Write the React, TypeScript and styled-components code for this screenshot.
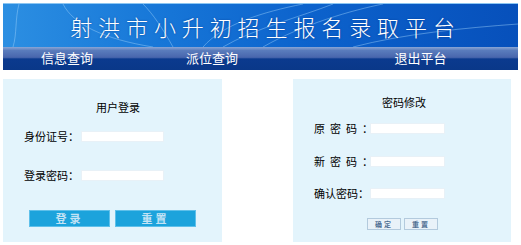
import React from 'react';
import styled, { createGlobalStyle } from 'styled-components';

const GlobalStyle = createGlobalStyle`
  html, body {
    margin: 0;
    padding: 0;
    background: #ffffff;
    font-family: "Liberation Sans", "Noto Sans CJK SC", sans-serif;
  }
`;

const Page = styled.div`
  width: 521px;
  height: 245px;
  padding: 3px;
  box-sizing: border-box;
`;

const Header = styled.div`
  width: 515px;
`;

const Banner = styled.div`
  position: relative;
  height: 43px;
  overflow: hidden;
  background: linear-gradient(90deg, #2c8fe2 0%, #1777d8 30%, #0c62cc 60%, #0750bb 100%);
  border-top: 1px solid #8cc6f2;
  display: flex;
  align-items: center;
  justify-content: center;
`;

const Arcs = styled.svg`
  position: absolute;
  left: 0;
  top: 0;
`;

const Title = styled.h1`
  position: relative;
  margin: 0 0 0 10px;
  font-family: "Noto Sans CJK SC", sans-serif;
  font-weight: 300;
  font-size: 22px;
  letter-spacing: 5.9px;
  color: #ffffff;
  text-shadow: 0 0 2px rgba(0, 40, 120, 0.6);
`;

const Nav = styled.div`
  height: 23px;
  display: grid;
  grid-template-columns: 128px 162px 1fr;
  background: linear-gradient(180deg, #8aa6d6 0%, #5a7cbc 15%, #4866ad 45%, #0b3a8e 52%, #0a3889 100%);
`;

const NavItem = styled.a<{ $shift: number }>`
  color: #ffffff;
  font-size: 13px;
  font-family: "Noto Sans CJK SC", sans-serif;
  line-height: 22px;
  text-align: center;
  padding-left: ${p => p.$shift}px;
`;

const Main = styled.div`
  display: flex;
  align-items: flex-start;
  margin-top: 9px;
`;

const Panel = styled.div<{ $w: number; $ml: number }>`
  width: ${p => p.$w}px;
  margin-left: ${p => p.$ml}px;
  height: 163px;
  background: #e3f4fc;
  box-sizing: border-box;
  font-family: "Noto Sans CJK SC", sans-serif;
  color: #000;
`;

const PanelTitle = styled.div<{ $top: number; $left: number }>`
  font-size: 11px;
  padding-top: ${p => p.$top}px;
  padding-left: ${p => p.$left}px;
  line-height: 14px;
`;

const Row = styled.div<{ $top: number; $left: number }>`
  display: flex;
  align-items: center;
  margin-top: ${p => p.$top}px;
  padding-left: ${p => p.$left}px;
  height: 14px;
`;

const Label = styled.span<{ $w: number; $spread?: boolean }>`
  width: ${p => p.$w}px;
  font-size: 11px;
  white-space: nowrap;
  letter-spacing: ${p => (p.$spread ? '5px' : '0')};
`;

const Input = styled.input<{ $w: number }>`
  width: ${p => p.$w}px;
  height: 11px;
  padding: 0;
  border: 1px solid #e8f1f7;
  background: #ffffff;
  box-sizing: border-box;
  outline: none;
`;

const Buttons = styled.div<{ $top: number; $left: number; $gap: number }>`
  display: flex;
  gap: ${p => p.$gap}px;
  margin-top: ${p => p.$top}px;
  padding-left: ${p => p.$left}px;
`;

const BlueButton = styled.button`
  width: 81px;
  height: 17px;
  padding: 0;
  border: 1px solid #5fc0ea;
  background: #1ca3dc;
  color: #c4e3f5;
  font-family: "Noto Sans CJK SC", sans-serif;
  font-size: 11px;
  font-weight: 700;
  letter-spacing: 3px;
  line-height: 15px;
`;

const SmallButton = styled.button`
  width: 34px;
  height: 12px;
  padding: 0;
  border: 1px solid #b3cadd;
  background: #e9f2f9;
  color: #4f6f93;
  font-family: "Noto Sans CJK SC", sans-serif;
  font-size: 7px;
  font-weight: 700;
  letter-spacing: 2px;
  line-height: 10px;
`;

const App: React.FC = () => {
  return (
    <Page>
      <GlobalStyle />
      <Header>
        <Banner>
          <Arcs width="515" height="43" viewBox="0 0 515 43">
            <g fill="none" stroke="#9fd3fb" strokeOpacity="0.45" strokeWidth="1">
              <path d="M10 43 C 14 30, 12 15, 16 0" />
              <path d="M200 43 C 220 20, 260 8, 300 0" />
              <path d="M220 43 C 250 25, 300 12, 330 0" />
              <path d="M260 43 C 300 20, 350 6, 380 0" />
              <path d="M140 0 C 150 10, 160 25, 170 43" />
              <path d="M60 0 C 70 20, 100 35, 150 43" />
              <path d="M350 43 C 400 30, 460 24, 515 20" />
            </g>
          </Arcs>
          <Title>射洪市小升初招生报名录取平台</Title>
        </Banner>
        <Nav>
          <NavItem $shift={0}>信息查询</NavItem>
          <NavItem $shift={0}>派位查询</NavItem>
          <NavItem $shift={30}>退出平台</NavItem>
        </Nav>
      </Header>
      <Main>
        <Panel $w={219} $ml={0}>
          <PanelTitle $top={21} $left={93}>用户登录</PanelTitle>
          <Row $top={15} $left={21}>
            <Label $w={57}>身份证号：</Label>
            <Input $w={83} />
          </Row>
          <Row $top={25} $left={21}>
            <Label $w={57}>登录密码：</Label>
            <Input $w={83} />
          </Row>
          <Buttons $top={28} $left={26} $gap={5}>
            <BlueButton>登录</BlueButton>
            <BlueButton>重置</BlueButton>
          </Buttons>
        </Panel>
        <Panel $w={218} $ml={71}>
          <PanelTitle $top={16} $left={89}>密码修改</PanelTitle>
          <Row $top={12} $left={21}>
            <Label $w={56} $spread>原密码：</Label>
            <Input $w={75} />
          </Row>
          <Row $top={19} $left={21}>
            <Label $w={56} $spread>新密码：</Label>
            <Input $w={75} />
          </Row>
          <Row $top={18} $left={21}>
            <Label $w={56}>确认密码：</Label>
            <Input $w={75} />
          </Row>
          <Buttons $top={18} $left={74} $gap={3}>
            <SmallButton>确定</SmallButton>
            <SmallButton>重置</SmallButton>
          </Buttons>
        </Panel>
      </Main>
    </Page>
  );
};

export default App;
